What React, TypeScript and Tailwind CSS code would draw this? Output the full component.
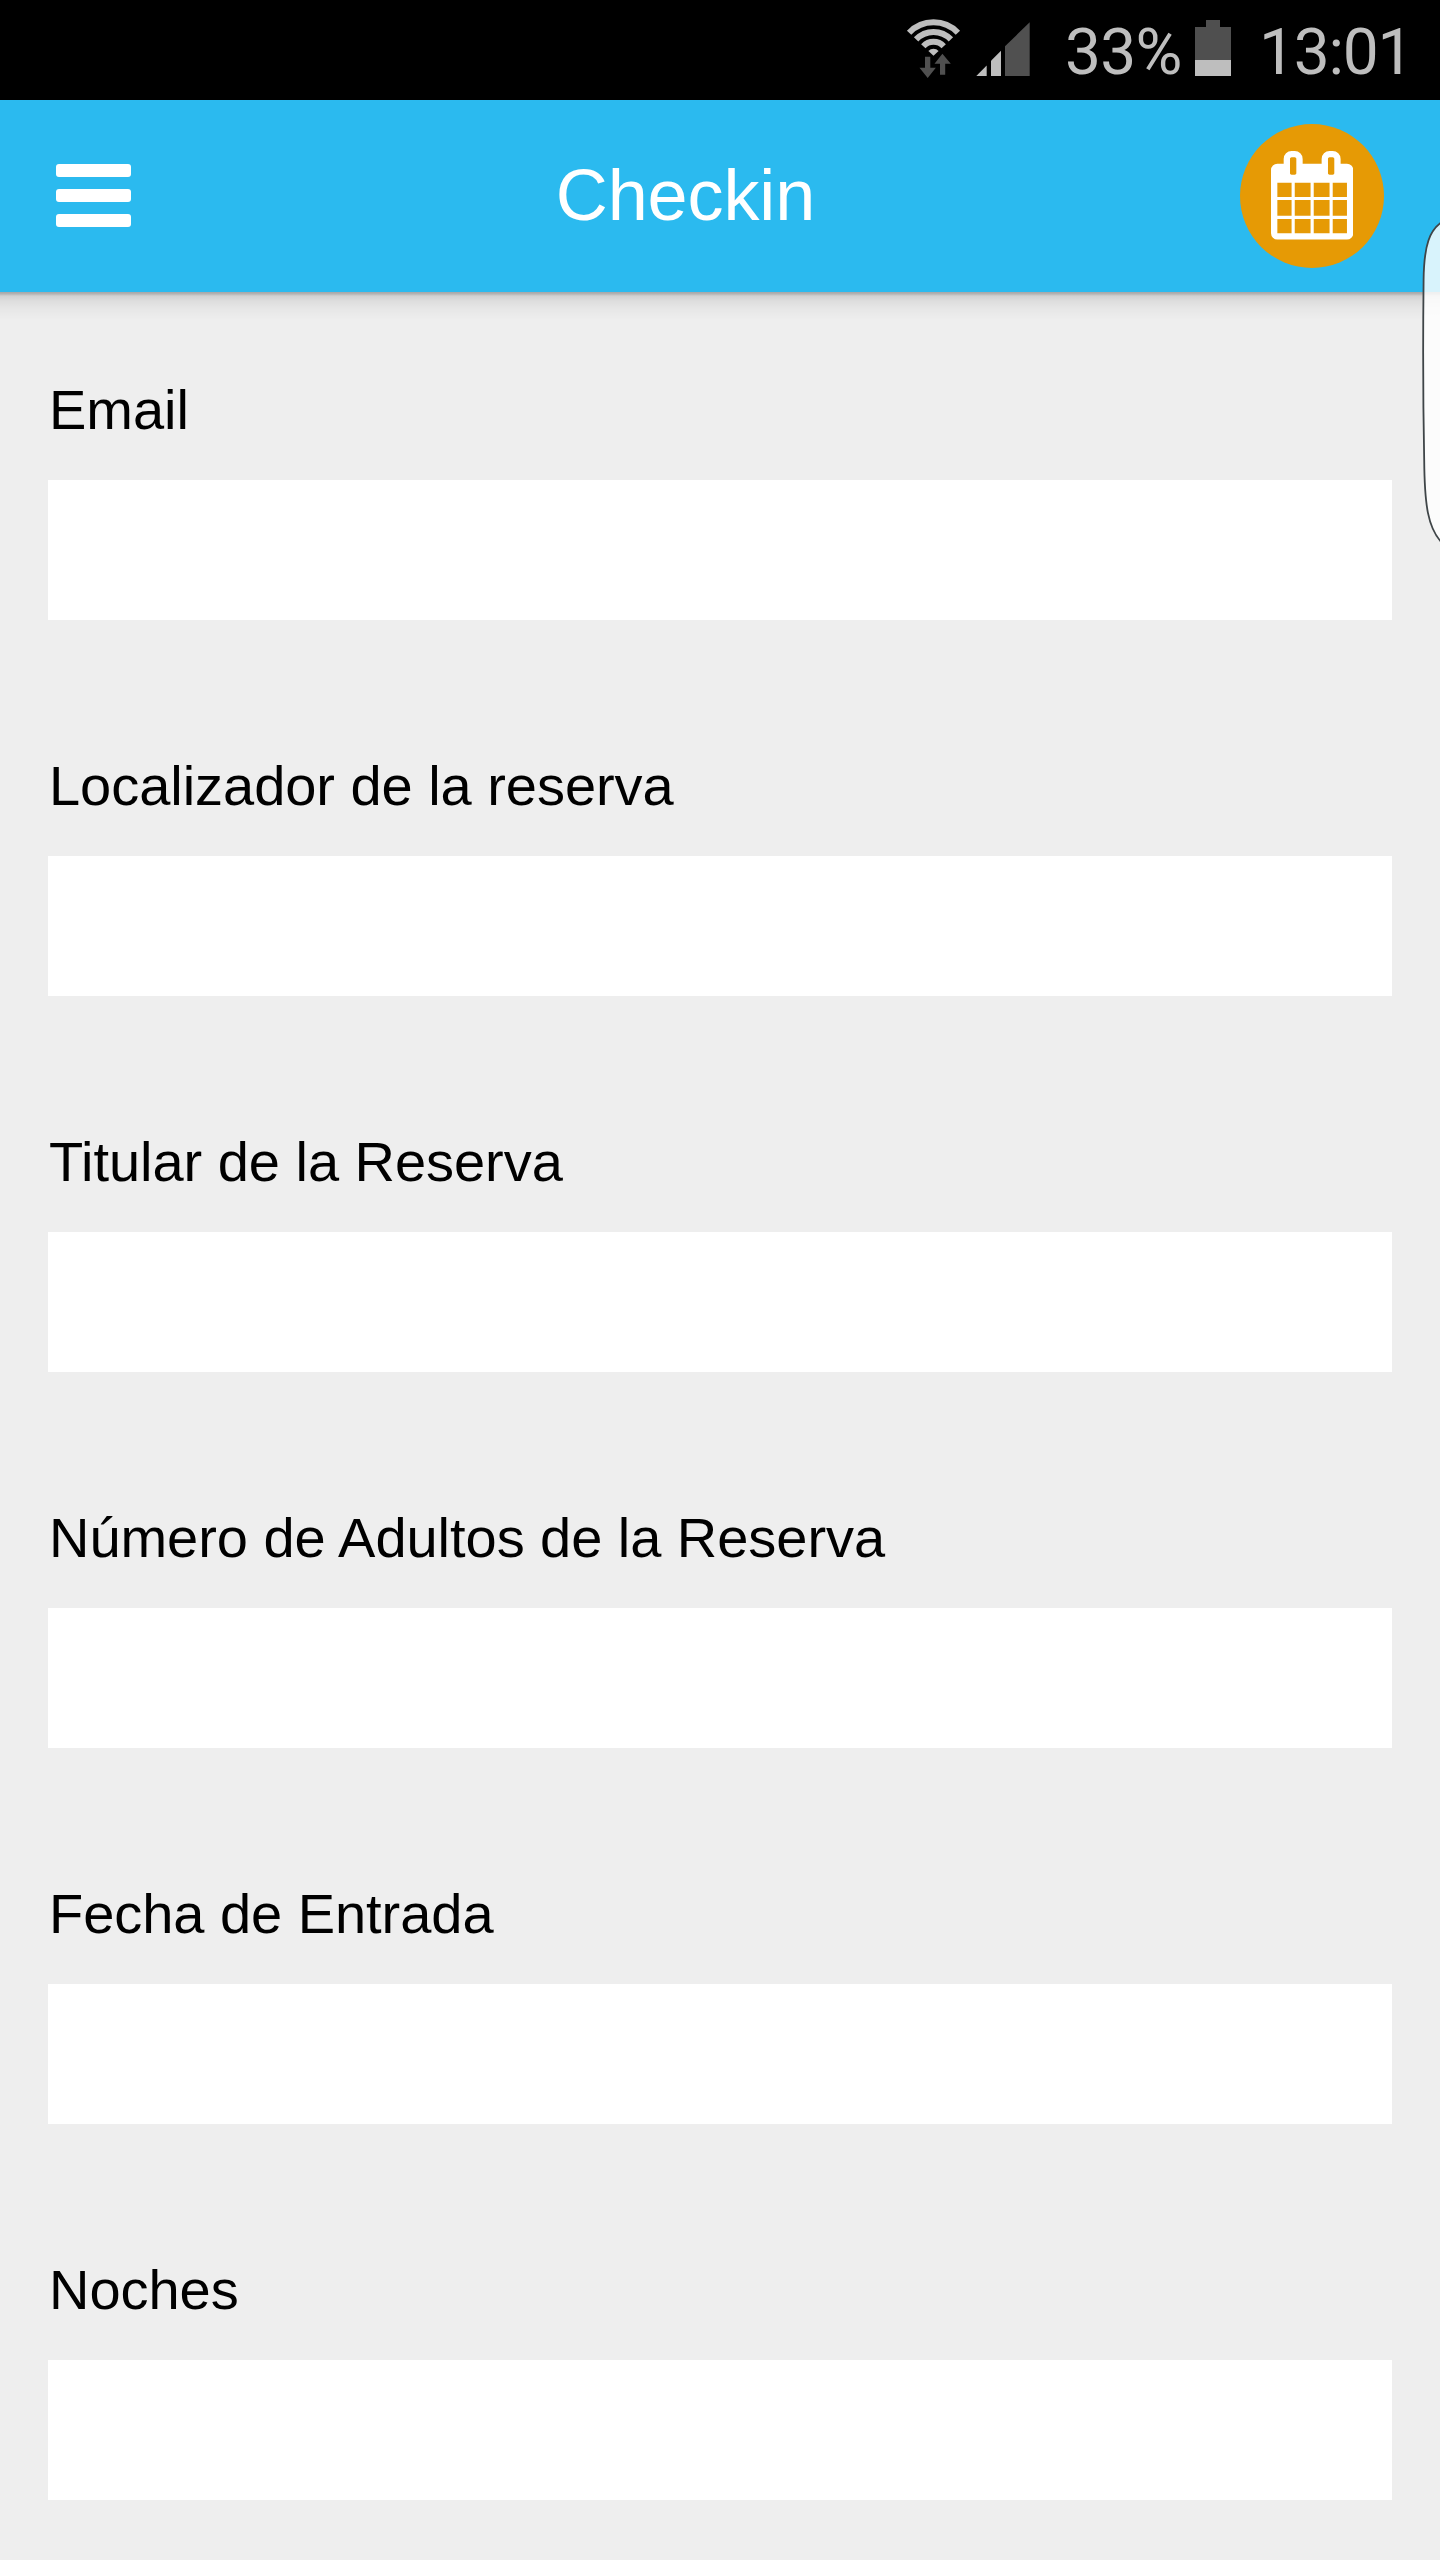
import React from 'react';

const fields = [
  { id: 'email', label: 'Email' },
  { id: 'locator', label: 'Localizador de la reserva' },
  { id: 'holder', label: 'Titular de la Reserva' },
  { id: 'adults', label: 'Número de Adultos de la Reserva' },
  { id: 'checkin', label: 'Fecha de Entrada' },
  { id: 'nights', label: 'Noches' },
];

const WifiIcon: React.FC = () => (
  <svg className="w-[56px] h-[60px] shrink-0" viewBox="0 0 56 60" fill="none">
    <g stroke="#bebebe" strokeWidth="6">
      <path d="M3.1 14.7A33.7 33.7 0 0 1 51.9 14.7" />
      <path d="M10.1 21.4A24 24 0 0 1 44.9 21.4" />
      <path d="M17.3 28.2A14 14 0 0 1 37.7 28.2" />
    </g>
    <path d="M27.5 37.7L22.4 32.9A7 7 0 0 1 32.6 32.9Z" fill="#bebebe" />
    <path d="M19 38.7h5.3v11h5.5L21.7 60L13.5 49.7H19z" fill="#505050" />
    <path d="M36.4 35.7L44.8 45.7h-5.6v11H34v-11h-5.5z" fill="#505050" />
  </svg>
);

const SignalIcon: React.FC = () => (
  <svg className="w-[54px] h-[54px] shrink-0" viewBox="0 0 54 54">
    <path d="M0.3 54H10.7V43.6z" fill="#bebebe" />
    <path d="M15 54V38.7L25 28.7V54z" fill="#bebebe" />
    <path d="M29 54V24.3L53.7 0.3V54z" fill="#505050" />
  </svg>
);

const BatteryIcon: React.FC = () => (
  <div className="flex flex-col items-center w-9 shrink-0">
    <div className="w-[14px] h-[7px] bg-[#4f4f4f]" />
    <div className="w-full h-[33px] bg-[#4f4f4f]" />
    <div className="w-full h-4 bg-[#bebebe]" />
  </div>
);

const CalendarIcon: React.FC = () => (
  <svg className="w-[82.3px] h-[88.6px]" viewBox="0 0 1664 1792" fill="#fff">
    <path d="M128 1664h288v-288h-288v288zM480 1664h320v-288h-320v288zM128 1312h288v-320h-288v320zM480 1312h320v-320h-320v320zM128 928h288v-288h-288v288zM864 1664h320v-288h-320v288zM480 928h320v-288h-320v288zM1248 1664h288v-288h-288v288zM864 1312h320v-320h-320v320zM512 448v-288q0-13-9.5-22.5t-22.5-9.5h-64q-13 0-22.5 9.5t-9.5 22.5v288q0 13 9.5 22.5t22.5 9.5h64q13 0 22.5-9.5t9.5-22.5zM1248 1312h288v-320h-288v320zM864 928h320v-288h-320v288zM1248 928h288v-288h-288v288zM1280 448v-288q0-13-9.5-22.5t-22.5-9.5h-64q-13 0-22.5 9.5t-9.5 22.5v288q0 13 9.5 22.5t22.5 9.5h64q13 0 22.5-9.5t9.5-22.5zM1664 384v1280q0 52-38 90t-90 38h-1408q-52 0-90-38t-38-90v-1280q0-52 38-90t90-38h128v-96q0-66 47-113t113-47h64q66 0 113 47t47 113v96h384v-96q0-66 47-113t113-47h64q66 0 113 47t47 113v96h128q52 0 90 38t38 90z" />
  </svg>
);

const StatusBar: React.FC = () => (
  <div className="flex h-[100px] bg-black text-[#bebebe] pl-[906px] font-[Roboto,sans-serif] text-[64px] leading-[106px] whitespace-nowrap">
    <div className="pt-[18px]"><WifiIcon /></div>
    <div className="pt-[22px] ml-[14px]"><SignalIcon /></div>
    <span className="ml-[35px] w-[130px] tracking-[-0.7px]">33%</span>
    <div className="pt-[20px]"><BatteryIcon /></div>
    <span className="ml-[28px] tracking-[-1.2px]">13:01</span>
  </div>
);

const Header: React.FC = () => (
  <header className="relative flex items-center justify-between h-48 px-14 bg-[#2bbaef]">
    <button className="flex flex-col gap-3 w-[75px] mb-[2px]" aria-label="Menu">
      <span className="w-full h-[13px] rounded-[3px] bg-white" />
      <span className="w-full h-[13px] rounded-[3px] bg-white" />
      <span className="w-full h-[13px] rounded-[3px] bg-white" />
    </button>
    <h1 className="text-[72px] leading-[96px] text-white mb-[2px] tracking-[-0.1px]">Checkin</h1>
    <button className="flex items-center justify-center size-36 pb-[1px] rounded-full bg-[#e69a05]" aria-label="Calendar">
      <CalendarIcon />
    </button>
    {/* Drop shadow under the toolbar */}
    <div className="absolute inset-x-0 top-full h-7 bg-[linear-gradient(to_bottom,rgba(0,0,0,0.3)_0px,rgba(0,0,0,0.24)_2px,rgba(0,0,0,0.12)_4px,rgba(0,0,0,0.07)_9px,rgba(0,0,0,0.03)_17px,transparent_28px)]" />
  </header>
);

export default function App() {
  return (
    <div className="relative w-[1440px] h-[2560px] overflow-hidden bg-[#eeeeee] font-['Liberation_Sans',Arial,sans-serif]">
      <StatusBar />
      <Header />

      <form className="flex flex-col gap-[136px] px-12 pt-[88px]">
        {fields.map((field) => (
          <div key={field.id} className="flex flex-col">
            <label htmlFor={field.id} className="h-[100px] pl-px text-[56px] leading-[60px] tracking-[-0.04px] text-black">
              {field.label}
            </label>
            <input id={field.id} className="block w-full h-[140px] bg-white outline-none" />
          </div>
        ))}
      </form>

      {/* Edge panel handle, floats above everything */}
      <svg className="absolute right-0 top-[220px] w-[18px] h-[324px]" viewBox="0 0 18 324">
        <path
          d="M20 2C8 10 2 24 1.6 60C1 110 1 180 2.2 240C2.6 286 6 308 20 323"
          fill="rgba(255,255,255,0.82)"
          stroke="#3f4548"
          strokeWidth="1.8"
        />
      </svg>
    </div>
  );
}
